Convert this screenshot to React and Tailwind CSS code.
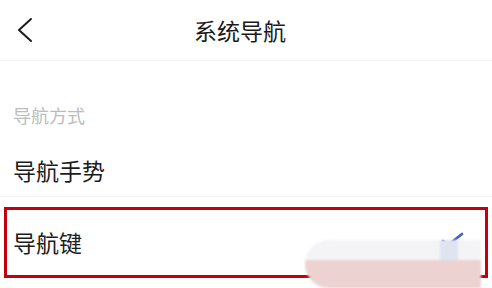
import React from 'react'

const font = { fontFamily: '"Noto Sans CJK SC", "Noto Sans", sans-serif' }

export default function App() {
    return (
        <main className="relative h-[288px] w-[492px] overflow-hidden bg-white text-[#1c1c1c]" style={font}>
            <header className="grid h-[61px] grid-cols-[1fr_auto_1fr] items-center border-b border-[#f3f3f3]">
                <div className="pl-[15px]">
                    <svg width="20" height="26" viewBox="0 0 20 26" fill="none">
                        <path d="M16 2 L4 13 L16 24" stroke="#1c1c1c" strokeWidth="2" strokeLinecap="round" strokeLinejoin="round" />
                    </svg>
                </div>
                <h1 className="mr-[12px] text-[23px] leading-[23px] font-normal text-[#1a1a1a]">系统导航</h1>
                <div />
            </header>

            <p className="mt-[45px] pl-[13px] text-[18px] leading-[18px] text-[#bcbcbc]">导航方式</p>

            <div className="border-b border-[#f3f3f3] pt-[35px] pb-[14px] pl-[13px] text-[23px] leading-[23px]">
                导航手势
            </div>

            <div className="mx-[4px] mt-[10px] flex h-[71px] items-center justify-between border-[3px] border-[#c3000b] pl-[6px] pr-[20px]">
                <span className="text-[23px] leading-[23px]">导航键</span>
                <svg width="24" height="16" viewBox="0 0 24 16" fill="none" className="-mt-[6px]">
                    <path d="M2 9 L7 13 L21 2" stroke="#3f5fc4" strokeWidth="2.6" strokeLinecap="round" strokeLinejoin="round" />
                </svg>
            </div>

            {/* blurred watermark over the lower right corner */}
            <div className="absolute left-[305px] top-[240px] flex h-[48px] w-[176px] flex-col overflow-hidden rounded-l-[24px] blur-[1px]">
                <div className="flex h-[20px] bg-[#f4f4f6]">
                    <div className="ml-[135px] h-[20px] w-[18px] bg-[#dfe4f1]" />
                </div>
                <div className="flex-1 bg-[#edd2d2]" />
            </div>
        </main>
    )
}
